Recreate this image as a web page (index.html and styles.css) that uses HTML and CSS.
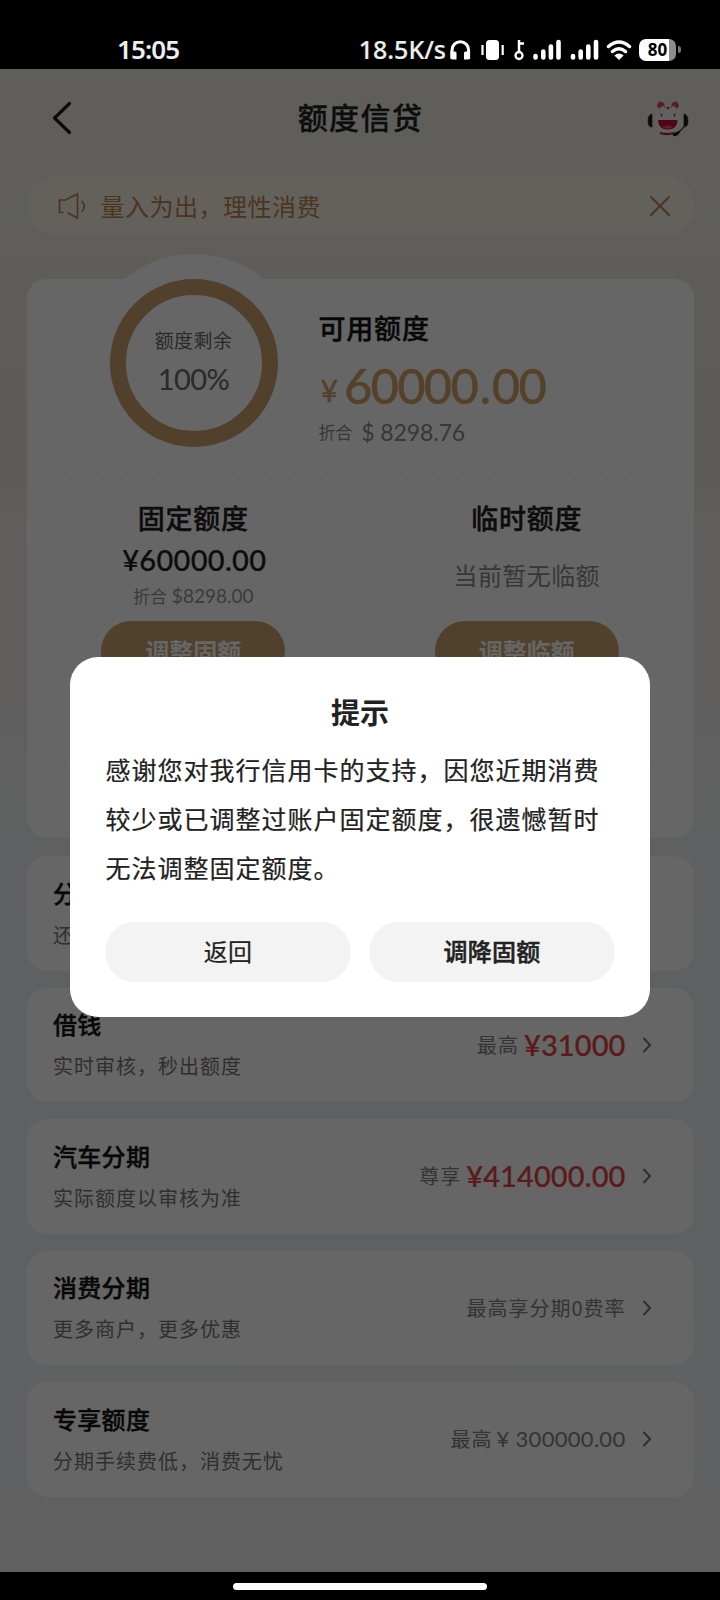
FILE: index.html
```html
<!DOCTYPE html>
<html lang="zh-CN">
<head>
<meta charset="utf-8">
<title>额度信贷</title>
<link rel="stylesheet" href="styles.css">
</head>
<body>
<div class="phone">
  <header class="status">
    <span class="clock">15:05</span>
    <div class="indicators">
      <span class="speed">18.5K/s</span>
      <div class="sys-icons">
        <svg width="190" height="24" viewBox="0 0 190 24" fill="none" stroke="#fff">
          <path d="M3 20V11a8.300 8.300 0 0 1 16.600 0v9" stroke-width="3"/>
          <path d="M1.500 12.500h4.500q1.500 0 1.500 1.500v6.500h-4q-2 0-2-2zM21 12.500h-4.500q-1.500 0-1.500 1.500v6.500h4q2 0 2-2z" fill="#fff" stroke="none"/>
          <rect x="37" y="1" width="13" height="20" rx="3.500" fill="#fff" stroke="none"/>
          <path d="M33.500 6v10M53.700 6v10" stroke-width="2.200"/>
          <circle cx="70" cy="16.500" r="3.500" stroke-width="2.300"/>
          <path d="M70 13V1M70 4.500h5" stroke-width="2.500"/>
          <path d="M86.500 17v1.500M94.300 12.500v6M101.900 7.500v11M109.500 3v15.500M124 17v1.500M131.700 12.500v6M139.300 7.500v11M147 3v15.500" stroke-width="4.600" stroke-linecap="round"/>
          <path d="M159.500 7.500q10.500-9 21 0M163.500 12.500q6.500-5.500 13 0" stroke-width="3.500" stroke-linecap="round"/>
          <path d="M165.300 16.500q4.700-4 9.400 0L170 21z" fill="#fff" stroke="none"/>
        </svg>
        <span class="battery">80</span><span class="battery-tip"></span>
      </div>
    </div>
  </header>

  <main class="page">
    <nav class="nav">
      <svg class="back" width="22" height="36" viewBox="0 0 22 36"><path d="M18.500 3.500L3.500 18l15 14.500" fill="none" stroke="#1c1c1c" stroke-width="3.200" stroke-linecap="round" stroke-linejoin="round"/></svg>
      <h1 class="nav-title">额度信贷</h1>
      <svg class="service" width="42" height="38" viewBox="0 0 42 38">
        <path d="M9 14L10 3q6-3 9 3h5q3-6 9-3l2 11q4 20-14 20T9 14z" fill="#f5f1f0"/>
        <path d="M10 7q1-6 5-4t2 4q-3 0-5 3zM32 7q-1-6-5-4t-2 4q3 0 5 3z" fill="#d84c70"/>
        <circle cx="21" cy="9" r="1.300" fill="#8a4555"/><circle cx="18" cy="8" r=".7" fill="#8a4555"/><circle cx="24" cy="8" r=".7" fill="#8a4555"/>
        <path d="M13 15l2.500 1-1.500 2M29 15l-2.500 1 1.500 2" fill="none" stroke="#555" stroke-width="1"/>
        <path d="M11 21h19.500q0 9.500-9.700 9.500T11 21z" fill="#c3123c"/>
        <path d="M15 28q5-3 11 0-5 3.500-11 0z" fill="#ee5570"/>
        <path d="M13 34q6 2 14 0" fill="none" stroke="#b9244b" stroke-width="2.300"/>
        <path d="M5 15q-4 1-4 7t4 6zM37 15q4 1 4 7t-4 6z" fill="#1c1c1c" stroke="#1c1c1c" stroke-width=".6"/>
        <path d="M38 26q-4 7-11 9" fill="none" stroke="#3c3838" stroke-width="1.300"/>
        <path d="M26 35l7-3-2 3.500-4 1.500z" fill="#1c1c1c" stroke="#1c1c1c"/>
      </svg>
    </nav>

    <section class="notice">
      <svg width="30" height="28" viewBox="0 0 30 28" fill="none" stroke="#b98355" stroke-width="1.700"><path d="M6 20.500H2.500V8h6L20.500 2v24l-9.500-5M25 9.500q4.500 4.500 0 10" stroke-linecap="round"/></svg>
      <span class="notice-text">量入为出，理性消费</span>
      <svg class="close" width="22" height="22" viewBox="0 0 22 22"><path d="M2 2l18 18M20 2L2 20" stroke="#b98b60" stroke-width="2.300" stroke-linecap="round"/></svg>
    </section>

    <section class="limit">
      <div class="summary">
        <div class="halo"><div class="ring">
          <span class="ring-label">额度剩余</span>
          <span class="ring-value">100%</span>
        </div></div>
        <div class="available">
          <h2 class="available-title">可用额度</h2>
          <p class="available-amount"><span class="yen">¥</span>60000<span class="point">.</span>00</p>
          <p class="available-usd"><span class="cn">折合</span>$ 8298.76</p>
        </div>
      </div>
      <div class="dots"></div>
      <div class="columns">
        <div class="column">
          <h2 class="column-title">固定额度</h2>
          <p class="column-amount">¥60000.00</p>
          <p class="column-usd"><span class="cn">折合</span> $8298.00</p>
          <div class="adjust">调整固额</div>
        </div>
        <div class="column">
          <h2 class="column-title">临时额度</h2>
          <p class="column-empty">当前暂无临额</p>
          <div class="adjust">调整临额</div>
        </div>
      </div>
      <div class="dots"></div>
    </section>

    <section class="list">
      <article class="row">
        <div><h3 class="row-title">分期</h3><p class="row-sub">还款</p></div>
      </article>
      <article class="row">
        <div><h3 class="row-title">借钱</h3><p class="row-sub">实时审核，秒出额度</p></div>
        <div class="row-end"><span>最高</span><b class="price">¥31000</b><svg class="chev" viewBox="0 0 10 16"><path d="M2 1.500L8 8l-6 6.500"/></svg></div>
      </article>
      <article class="row">
        <div><h3 class="row-title">汽车分期</h3><p class="row-sub">实际额度以审核为准</p></div>
        <div class="row-end"><span>尊享</span><b class="price">¥414000.00</b><svg class="chev" viewBox="0 0 10 16"><path d="M2 1.500L8 8l-6 6.500"/></svg></div>
      </article>
      <article class="row">
        <div><h3 class="row-title">消费分期</h3><p class="row-sub">更多商户，更多优惠</p></div>
        <div class="row-end"><span>最高享分期0费率</span><svg class="chev" viewBox="0 0 10 16"><path d="M2 1.500L8 8l-6 6.500"/></svg></div>
      </article>
      <article class="row">
        <div><h3 class="row-title">专享额度</h3><p class="row-sub">分期手续费低，消费无忧</p></div>
        <div class="row-end"><span>最高</span><span class="plain">¥ 300000.00</span><svg class="chev" viewBox="0 0 10 16"><path d="M2 1.500L8 8l-6 6.500"/></svg></div>
      </article>
    </section>
  </main>

  <div class="scrim">
    <section class="dialog">
      <h2 class="dialog-title">提示</h2>
      <p class="dialog-body">感谢您对我行信用卡的支持，因您近期消费<br>较少或已调整过账户固定额度，很遗憾暂时<br>无法调整固定额度。</p>
      <div class="dialog-actions">
        <div class="action">返回</div>
        <div class="action action-strong">调降固额</div>
      </div>
    </section>
  </div>

  <footer class="gesture"><div class="gesture-bar"></div></footer>
</div>
</body>
</html>
```

FILE: styles.css
```css
* { box-sizing: border-box; }
body, h1, h2, h3, p { margin: 0; }
body {
  width: 720px;
  height: 1600px;
  overflow: hidden;
  font-family: "Noto Sans CJK SC", sans-serif;
  background: #000;
}
.phone { position: relative; display: flex; flex-direction: column; height: 1600px; }

/* system status bar */
.status { display: flex; justify-content: space-between; height: 69px; padding: 34px 35px 0 117px; color: #eee; }
.clock, .speed { font: 600 26px/30px "Noto Sans", sans-serif; }
.clock { letter-spacing: -.900px; }
.speed { font-weight: 500; font-size: 25px; -webkit-text-stroke: .2px #eee; }
.indicators { display: flex; align-items: flex-start; }
.sys-icons { display: flex; width: 236px; margin: 5px 0 0 3px; }
.sys-icons svg { flex: none; }
.battery { width: 37px; height: 22px; border-radius: 7px; background: linear-gradient(90deg, #fff 30px, #8d8d8d 30px); color: #000; font: 700 17px/22px "Noto Sans", sans-serif; text-align: center; }
.battery-tip { width: 3px; height: 7px; margin: 7px 0 0 2px; border-radius: 0 4px 4px 0; background: #777; }

.page {
  flex: none;
  height: 1503px;
  padding: 0 26.500px;
  overflow: hidden;
  background: linear-gradient(#eeebe2 0, #ebe9df 220px, #e9e6dc 410px, #efece6 470px, #efeeed 650px, #eef0f3 800px, #eff2f5 1380px, #f0f0f0 1503px);
}

.nav { display: flex; align-items: center; justify-content: space-between; height: 98px; padding: 0 4px 0 24px; }
.nav-title { font-size: 30px; font-weight: 500; line-height: 40px; letter-spacing: 1.400px; color: #222; margin: 0 0 5px 1px; -webkit-text-stroke: .3px #222; }

.notice { display: flex; align-items: center; height: 60px; margin-top: 9px; padding: 0 22.500px 0 30px; border-radius: 30px; background: linear-gradient(90deg, #fbf1e7, #f8f3e6); }
.notice-text { margin: -1px 0 0 14px; font-size: 24px; line-height: 32px; letter-spacing: .500px; color: #b98355; }
.close { margin-left: auto; }

/* limit summary card */
.limit { height: 559px; margin-top: 43px; border-radius: 20px; background: #fff; }
.summary { display: flex; height: 189px; }
.halo { flex: none; width: 218px; height: 218px; margin: -25px 0 0 58px; padding: 25px; border-radius: 50%; background: #fff; }
.ring { width: 168px; height: 168px; padding-top: 31px; border: 16px solid #cba06e; border-radius: 50%; display: flex; flex-direction: column; align-items: center; color: #696969; }
.ring-label { font-size: 19px; line-height: 28px; letter-spacing: .400px; }
.ring-value { margin-top: 8px; font: 400 29px/34px Lato, sans-serif; letter-spacing: -.500px; }
.available { padding: 31px 0 0 16px; }
.available-title { font-size: 27px; font-weight: 500; line-height: 36px; letter-spacing: .800px; color: #161616; -webkit-text-stroke: .4px #161616; }
.available-amount { height: 60px; margin-top: 9px; font: 500 49px/60px Lato, sans-serif; letter-spacing: -1.800px; color: #d3a36a; white-space: nowrap; -webkit-text-stroke: .3px #d3a36a; }
.yen { display: inline-block; margin: 0 6px 0 2px; font-size: 30px; line-height: 30px; letter-spacing: 0; vertical-align: 2px; }
.point { margin: 0 2.500px; }
.available-usd { margin-top: 2px; display: flex; align-items: center; font: 400 23px/30px Lato, sans-serif; letter-spacing: -.100px; color: #8b8b8b; }
.cn { font-family: "Noto Sans CJK SC", sans-serif; font-size: 17px; font-weight: 400; }
.available-usd .cn { margin-right: 9px; }
.dots { height: 3px; margin: 5px 38px 0 26px; background: repeating-linear-gradient(90deg, #f7f7f7 0 3px, transparent 3px 10.500px); }
.columns { display: flex; }
.column { width: 50%; height: 282px; padding-top: 24px; display: flex; flex-direction: column; align-items: center; }
.column-title { font-size: 27px; font-weight: 500; line-height: 36px; letter-spacing: .700px; color: #222; -webkit-text-stroke: .4px #222; }
.column-amount { margin-top: 6px; font: 500 29px/36px Lato, sans-serif; color: #222; letter-spacing: .300px; padding-left: 2px; -webkit-text-stroke: .2px #222; }
.column-usd { height: 28px; margin-top: 4px; font: 400 19px/28px Lato, sans-serif; color: #959595; }
.column-empty { height: 22px; margin: 23px 0 29px; font-size: 24px; line-height: 32px; letter-spacing: .400px; color: #8b8b8b; }
.adjust { width: 184px; height: 60px; margin-top: 11px; border-radius: 30px; background: #cba06e; color: #fff; font-size: 24px; font-weight: 700; line-height: 59px; text-align: center; }

.list { margin-top: 18px; display: flex; flex-direction: column; gap: 17px; }
.row { display: flex; justify-content: space-between; align-items: center; height: 114.500px; padding: 0 42px 0 26.500px; border-radius: 20px; background: #fff; }
.row-title { margin-top: -1px; font-size: 24px; font-weight: 500; line-height: 34px; letter-spacing: .300px; color: #161616; -webkit-text-stroke: .4px #161616; }
.row-sub { margin-top: 10px; font-size: 20px; line-height: 30px; letter-spacing: 1px; color: #767676; }
.row-end { display: flex; align-items: center; font-size: 20px; letter-spacing: 1px; line-height: 30px; color: #828282; }
.price { margin-left: 5px; font: 500 29px/34px Lato, sans-serif; letter-spacing: .100px; color: #e24444; -webkit-text-stroke: .2px #e24444; }
.plain { margin-left: 4px; font: 400 22px/30px Lato, sans-serif; letter-spacing: .300px; }
.chev { width: 10px; height: 16px; margin-left: 16px; fill: none; stroke: #777; stroke-width: 2; stroke-linecap: round; }

/* prompt above the dimmed page */
.scrim { position: absolute; top: 69px; left: 0; width: 720px; height: 1503px; padding: 588px 70px 0; background: rgba(0, 0, 0, .6); }
.dialog { height: 360px; padding: 34px 35px 0; border-radius: 28px; background: #fff; color: #222; }
.dialog-title { font-size: 29px; font-weight: 700; line-height: 40px; text-align: center; }
.dialog-body { margin: 14px 0 0 .500px; font-size: 25px; line-height: 49px; letter-spacing: 1px; white-space: nowrap; -webkit-text-stroke: .2px #222; }
.dialog-actions { display: flex; gap: 18px; margin-top: 30px; }
.action { flex: 1; height: 60px; border-radius: 30px; background: #f3f3f3; font-size: 24px; line-height: 57px; letter-spacing: .300px; text-align: center; -webkit-text-stroke: .2px #222; }
.action-strong { font-weight: 500; -webkit-text-stroke: .5px #222; }

.gesture { flex: none; height: 28px; padding-top: 11px; background: #000; }
.gesture-bar { width: 254px; height: 7px; margin: 0 auto; border-radius: 4px; background: #fff; }
```
